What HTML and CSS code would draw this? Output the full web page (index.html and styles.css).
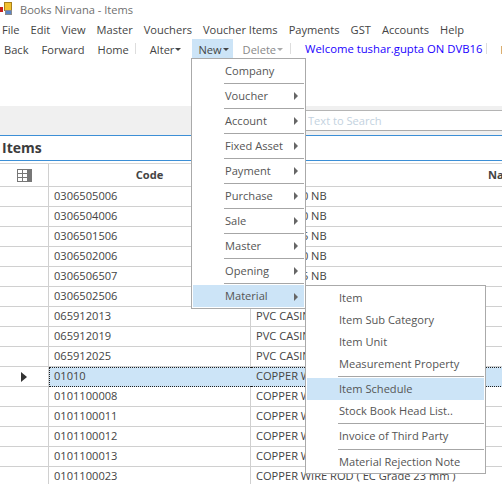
FILE: index.html
```html
<!DOCTYPE html>
<html lang="en">
<head>
  <meta charset="UTF-8">
  <title>Books Nirvana - Items</title>
  <link rel="stylesheet" href="styles.css">
</head>
<body>
  <div class="window">
    <div class="titlebar">
      <svg class="appIcon" width="14" height="14" viewBox="0 0 14 14">
        <rect x="5.5" y="0.5" width="7" height="8" fill="#f2c230" stroke="#a8801c"/>
        <rect x="0" y="5" width="4" height="5" fill="#c8201c"/>
        <rect x="6.5" y="8.5" width="6" height="4" fill="#5a86c8" stroke="#8a8a8a"/>
      </svg>
      <span>Books Nirvana - Items</span>
    </div>
    <div class="menubar">
      <span>File</span><span>Edit</span><span>View</span><span>Master</span><span>Vouchers</span><span>Voucher Items</span><span>Payments</span><span>GST</span><span>Accounts</span><span>Help</span>
    </div>
    <div class="toolbar">
      <span class="tool">Back</span>
      <span class="tool">Forward</span>
      <span class="tool">Home</span>
      <i class="toolSep first"></i>
      <span class="tool drop alter">Alter</span>
      <span class="tool drop active">New</span>
      <span class="tool drop disabled">Delete</span>
      <i class="toolSep"></i>
      <span class="welcome">Welcome tushar.gupta ON DVB16</span>
      <i class="toolSep last"></i>
      <span class="tool">P</span>
    </div>
    <div class="blank"></div>
    <div class="searchBand">
      <div class="searchBox">Text to Search</div>
    </div>
    <h1 class="heading">Items</h1>
    <div class="grid">
      <div class="row head">
        <div class="cell rowHead">
          <svg width="15" height="13" viewBox="0 0 15 13"><rect x="0.5" y="0.5" width="14" height="12" fill="#fff" stroke="#777"/><rect x="10" y="0" width="5" height="13" fill="#777"/><path d="M0 4.5h10M0 8.5h10M5.5 0v13" stroke="#777" fill="none"/></svg>
        </div>
        <div class="cell code">Code</div>
        <div class="cell name">Name</div>
      </div>
      <div class="row"><div class="cell rowHead"></div><div class="cell code">0306505006</div><div class="cell name">GI PIPE 50 NB</div></div>
      <div class="row"><div class="cell rowHead"></div><div class="cell code">0306504006</div><div class="cell name">GI PIPE 40 NB</div></div>
      <div class="row"><div class="cell rowHead"></div><div class="cell code">0306501506</div><div class="cell name">GI PIPE 15 NB</div></div>
      <div class="row"><div class="cell rowHead"></div><div class="cell code">0306502006</div><div class="cell name">GI PIPE 20 NB</div></div>
      <div class="row"><div class="cell rowHead"></div><div class="cell code">0306506507</div><div class="cell name">GI PIPE 65 NB</div></div>
      <div class="row"><div class="cell rowHead"></div><div class="cell code">0306502506</div><div class="cell name">GI PIPE 25 NB</div></div>
      <div class="row"><div class="cell rowHead"></div><div class="cell code">065912013</div><div class="cell name">PVC CASING</div></div>
      <div class="row"><div class="cell rowHead"></div><div class="cell code">065912019</div><div class="cell name">PVC CASING</div></div>
      <div class="row"><div class="cell rowHead"></div><div class="cell code">065912025</div><div class="cell name">PVC CASING</div></div>
      <div class="row current"><div class="cell rowHead"><i class="pointer"></i></div><div class="cell code">01010</div><div class="cell name">COPPER WIRE</div></div>
      <div class="row"><div class="cell rowHead"></div><div class="cell code">0101100008</div><div class="cell name">COPPER WIRE</div></div>
      <div class="row"><div class="cell rowHead"></div><div class="cell code">0101100011</div><div class="cell name">COPPER WIRE</div></div>
      <div class="row"><div class="cell rowHead"></div><div class="cell code">0101100012</div><div class="cell name">COPPER WIRE</div></div>
      <div class="row"><div class="cell rowHead"></div><div class="cell code">0101100013</div><div class="cell name">COPPER WIRE</div></div>
      <div class="row"><div class="cell rowHead"></div><div class="cell code">0101100023</div><div class="cell name">COPPER WIRE ROD ( EC Grade 23 mm )</div></div>
    </div>
  </div>

  <div class="menu newMenu">
    <div class="item">Company</div>
    <hr class="sep">
    <div class="item sub">Voucher</div>
    <hr class="sep">
    <div class="item sub">Account</div>
    <hr class="sep">
    <div class="item sub">Fixed Asset</div>
    <hr class="sep">
    <div class="item sub">Payment</div>
    <hr class="sep">
    <div class="item sub">Purchase</div>
    <hr class="sep">
    <div class="item sub">Sale</div>
    <hr class="sep">
    <div class="item sub">Master</div>
    <hr class="sep">
    <div class="item sub">Opening</div>
    <hr class="sep">
    <div class="item sub hot">Material</div>
  </div>

  <div class="menu materialMenu">
    <div class="item">Item</div>
    <div class="item">Item Sub Category</div>
    <div class="item">Item Unit</div>
    <div class="item">Measurement Property</div>
    <hr class="sep">
    <div class="item hot">Item Schedule</div>
    <div class="item">Stock Book Head List..</div>
    <hr class="sep">
    <div class="item tall short">Invoice of Third Party</div>
    <hr class="sep">
    <div class="item tall">Material Rejection Note</div>
  </div>
</body>
</html>
```

FILE: styles.css
```css
html, body { margin: 0; padding: 0; }
body {
  width: 502px;
  height: 484px;
  overflow: hidden;
  position: relative;
  background: #fff;
  font-family: "Open Sans", "Noto Sans", sans-serif;
  font-size: 11.1px;
  color: #444;
}
.window { display: flex; flex-direction: column; height: 484px; overflow: hidden; }
.window > * { flex: none; }

.titlebar { display: flex; align-items: center; gap: 7px; height: 18px; color: #6f6f6f; }
.appIcon { margin-left: -1px; flex: none; }

.menubar { display: flex; gap: 11px; height: 21px; align-items: center; padding: 2px 0 0 2px; box-sizing: border-box; white-space: nowrap; }

.toolbar { display: flex; align-items: center; height: 19px; white-space: nowrap; }
.tool { height: 19px; line-height: 21px; padding: 0 6px 0 4px; margin-right: 3px; flex: none; }
.toolSep { width: 1px; height: 11px; background: #ddd; margin: 0 14px 0 0; flex: none; }
.toolSep.first { margin: 0 10px 0 -3px; }
.toolSep.last { margin: 0 9px 0 4px; }
.drop::after {
  content: "";
  display: inline-block;
  border: 3px solid transparent;
  border-top-color: #444;
  border-bottom: 0;
  margin-left: 1px;
  vertical-align: 3px;
}
.alter { margin-right: 5px; }
.active { background: #cce4f7; padding: 0 4px 0 6px; margin-right: 0; }
.disabled { color: #888; margin-left: 6px; margin-right: 1px; }
.disabled::after { border-top-color: #aaa; }
.welcome { color: #1a00ff; line-height: 21px; font-size: 11.3px; flex: none; }

.blank { height: 48px; }
.searchBand { height: 29px; background: #f0f0f0; padding-top: 4px; box-sizing: border-box; }
.searchBox {
  margin-left: 306px;
  height: 21px;
  background: #fff;
  border-top: 1px solid #b4b4b4;
  border-bottom: 1px solid #aaa;
  box-sizing: border-box;
  padding-left: 2px;
  line-height: 19px;
  color: #c3d2e0;
}
.heading {
  margin: 0;
  height: 26px;
  box-sizing: border-box;
  border-top: 1px solid #3c8fd6;
  border-bottom: 1px solid #3c8fd6;
  padding-left: 2px;
  font-size: 14px;
  font-weight: 700;
  line-height: 24px;
  color: #3c3c3c;
}

.grid { margin-top: 2px; border-top: 1px solid #d6d6d6; }
.row { display: grid; grid-template-columns: 49px 202px 300px; height: 20px; border-bottom: 1px solid #d0d0d0; box-sizing: border-box; white-space: nowrap; }
.row.head { height: 23px; }
.cell { padding-left: 5px; line-height: 18px; overflow: hidden; box-sizing: border-box; }
.rowHead { border-right: 1px solid #d0d0d0; padding: 0; display: flex; align-items: center; justify-content: center; }
.code { border-right: 1px solid #d0d0d0; }
.head .cell { line-height: 22px; font-weight: 700; }
.head .code { text-align: center; padding-left: 0; }
.head .name { padding-left: 237px; }

.current .code, .current .name {
  height: 20px;
  background: #cce4f7;
  border-top: 1px dotted #222;
  border-bottom: 1px dotted #222;
  line-height: 16px;
}
.current .code { border-left: 1px dotted #222; padding-left: 4px; border-right: 0; }
.pointer { width: 0; height: 0; border: 5px solid transparent; border-left: 6px solid #333; border-right: 0; }

.menu {
  position: absolute;
  background: #fff;
  border: 1px solid #aaa;
  box-sizing: border-box;
  padding: 0 1px;
  color: #555;
}
.newMenu { left: 191px; top: 58px; width: 115px; height: 251px; }
.materialMenu { left: 305px; top: 285px; width: 181px; height: 189px; padding-top: 1px; }
.item {
  position: relative;
  height: 24px;
  line-height: 24px;
  padding-left: 32px;
  white-space: nowrap;
}
.sep { height: 1px; margin: 0 0 0 31px; border: 0; background: #a6a6a6; }
.newMenu .hot { height: 22px; line-height: 22px; margin-top: 1px; }
.materialMenu .item { height: 22px; line-height: 22px; padding-left: 32px; }
.materialMenu .sep { margin: 1px 0 1px 31px; }
.materialMenu .tall { height: 24px; line-height: 22px; }
.materialMenu .short { height: 23px; }
.item.hot { background: #cce4f7; }
.sub::after {
  content: "";
  position: absolute;
  right: 6px;
  top: 8px;
  border: 4px solid transparent;
  border-left: 4px solid #666;
  border-right: 0;
}
```
